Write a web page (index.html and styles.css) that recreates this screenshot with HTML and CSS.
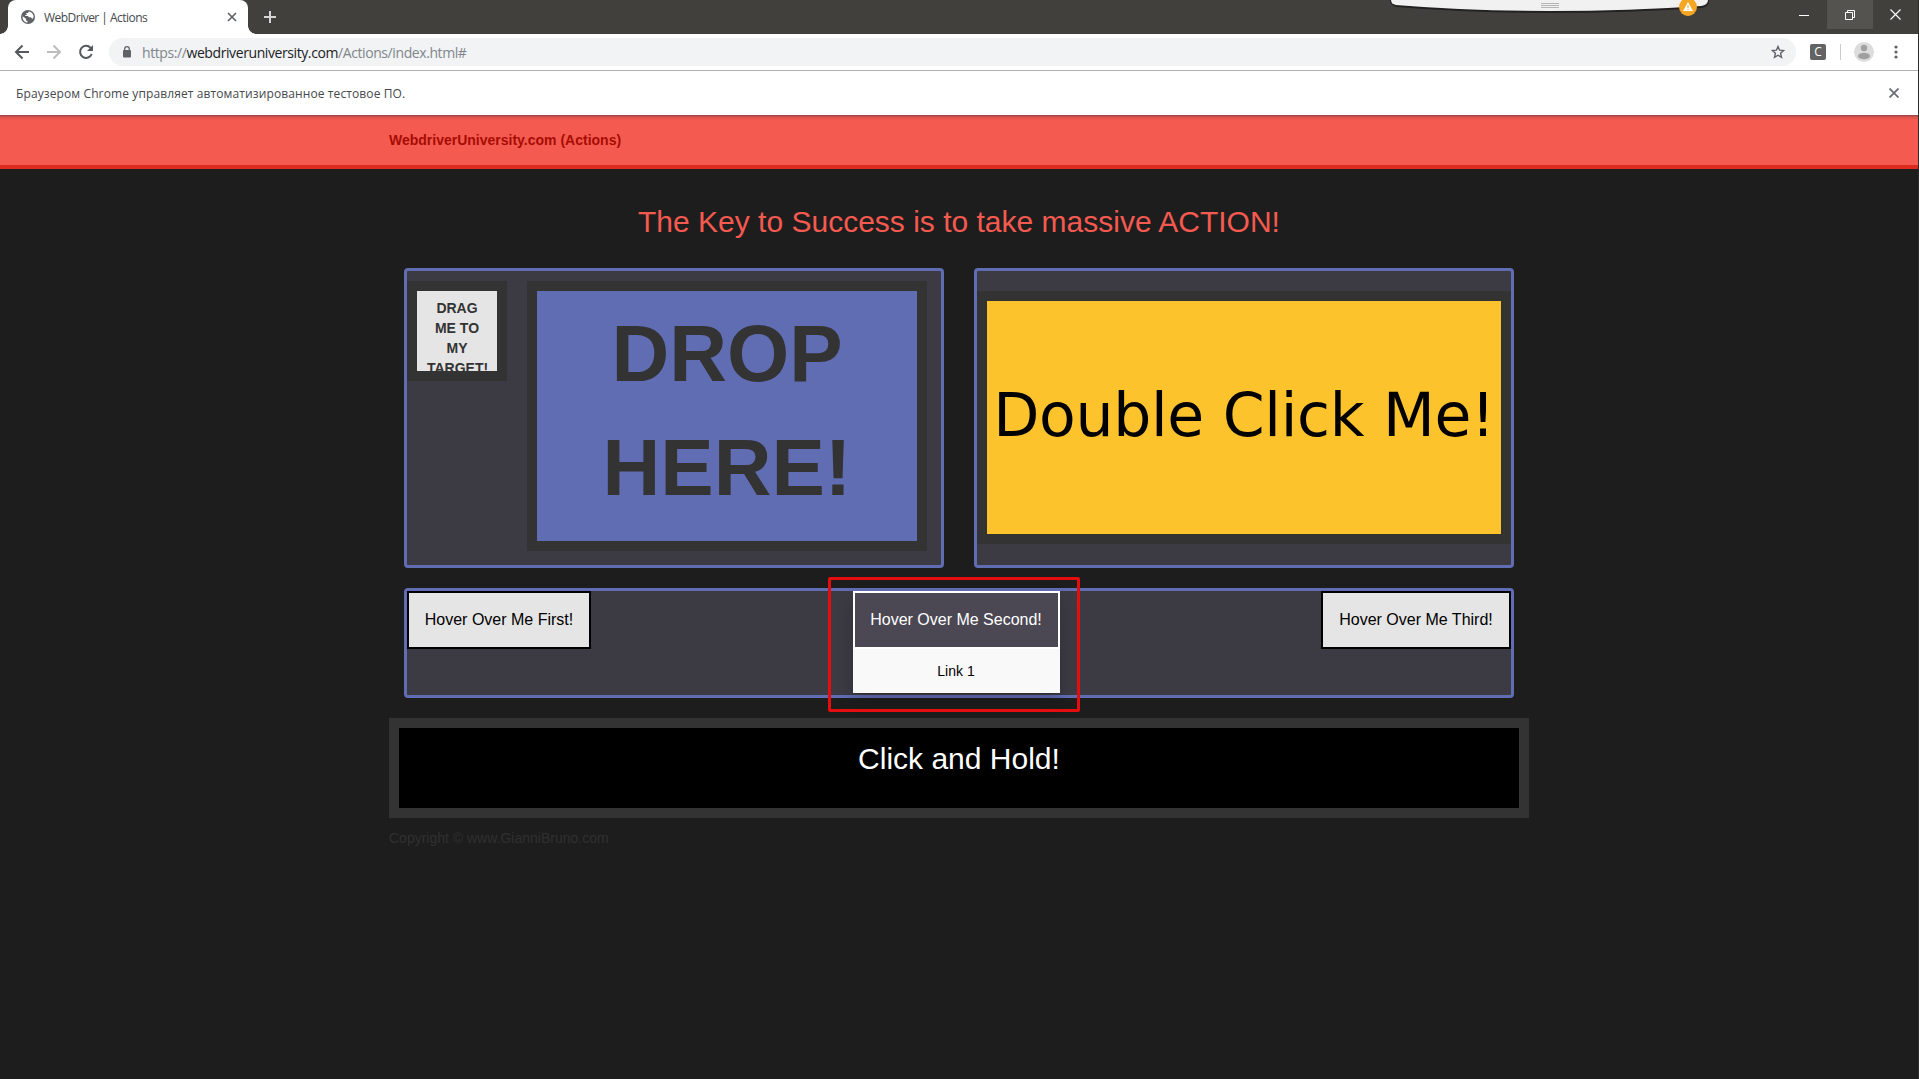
FILE: index.html
```html
<!DOCTYPE html>
<html lang="ru">
<head>
<meta charset="utf-8">
<title>WebDriver | Actions</title>
<link rel="stylesheet" href="styles.css">
</head>
<body>
<div class="window">
  <header class="tabstrip">
    <div class="tab">
      <svg class="globe" width="14" height="14" viewBox="0 0 14 14"><circle cx="7" cy="7" r="7" fill="#5f6368"/><path d="M1.600 6.200 5 8.800v1.400l1.500 1v1.400C3.500 12.500 1.300 9.800 1.600 6.200ZM4.500 3h2.300L8 1.600c2.500.5 4.400 2.300 4.700 5.200l-1.200 2.200-1.700-1.700H8L6.800 6.100H4.300V4.900h1.400V3.700Z" fill="#fff"/></svg>
      <span class="tab-title">WebDriver | Actions</span>
      <svg class="tab-close" width="10" height="10" viewBox="0 0 10 10" stroke="#5f6368" stroke-width="1.7"><path d="M1 1l8 8M9 1l-8 8"/></svg>
    </div>
    <svg class="new-tab" width="12" height="12" viewBox="0 0 12 12" stroke="#d5d5d4" stroke-width="2"><path d="M6 0v12M0 6h12"/></svg>
    <div class="window-buttons">
      <span class="wbtn"><svg width="10" height="10" viewBox="0 0 10 10" stroke="#fff"><path d="M0 5.500h10"/></svg></span>
      <span class="wbtn wbtn-hover"><svg width="10" height="10" viewBox="0 0 10 10" stroke="#fff" fill="none"><path d="M.5 2.500h7v7h-7zM2.500 2.500v-2h7v7h-2"/></svg></span>
      <span class="wbtn"><svg width="11" height="11" viewBox="0 0 11 11" stroke="#fff" stroke-width="1.1"><path d="M.5.5l10 10M10.500.5l-10 10"/></svg></span>
    </div>
    <svg class="session-bar" width="322" height="20" viewBox="0 0 322 20"><path d="M2 1Q3 5 8 6Q80 12 160 12T312 7Q319 6 319 1V0H2Z" fill="none" stroke="#222" stroke-width="2"/><path d="M2 0Q2 4 7 5Q80 11 160 11T312 6Q319 5 319 0Z" fill="#f1f1f1"/><path d="M152 3.500h18M152 5.500h18M152 7.500h18" stroke="#b5b5b5"/><circle cx="299" cy="7" r="9" fill="#f5a623"/><path d="M299 2l5 9h-10z" fill="#fff"/><path d="M299 5v3M299 9v1" stroke="#f5a623"/></svg>
  </header>
  <div class="toolbar">
    <svg width="16" height="16" viewBox="0 0 16 16" fill="none" stroke="#55585c" stroke-width="2"><path d="M15 8H2M8.500 1.500 2 8l6.500 6.500"/></svg>
    <svg width="16" height="16" viewBox="0 0 16 16" fill="none" stroke="#bdbdbd" stroke-width="2"><path d="M1 8h13M7.500 1.500 14 8l-6.500 6.500"/></svg>
    <svg width="16" height="16" viewBox="0 0 16 16" fill="none" stroke="#55585c" stroke-width="2"><path d="M13.700 10A6 6 0 1 1 12.500 3.800L14 5.300"/><path d="M15 1v6H9z" fill="#55585c" stroke="none"/></svg>
    <div class="omnibox">
      <svg width="10" height="12" viewBox="0 0 10 12"><rect x="1" y="4" width="8" height="7.500" rx="1" fill="#5f6368"/><path d="M2.700 5V3a2.300 2.300 0 0 1 4.600 0V5" fill="none" stroke="#5f6368" stroke-width="1.300"/></svg>
      <span class="url">https://<b>webdriveruniversity.com</b>/Actions/index.html#</span>
      <svg class="star" width="14" height="14" viewBox="0 0 14 14"><path d="M7 1.500l1.600 3.700 4 .4-3 2.700.9 4L7 10.200l-3.500 2.100.9-4-3-2.700 4-.4z" fill="none" stroke="#5f6368" stroke-width="1.400"/></svg>
    </div>
    <span class="extension">C</span>
    <span class="divider"></span>
    <svg class="avatar" width="20" height="20" viewBox="0 0 20 20"><circle cx="10" cy="10" r="10" fill="#dcdcdc"/><circle cx="10" cy="6" r="3.200" fill="#a0a0a0"/><ellipse cx="10" cy="14" rx="6" ry="3.200" fill="#a0a0a0"/></svg>
    <svg class="menu" width="4" height="14" viewBox="0 0 4 14" fill="#5f6368"><circle cx="2" cy="2" r="1.600"/><circle cx="2" cy="7" r="1.600"/><circle cx="2" cy="12" r="1.600"/></svg>
  </div>
  <div class="infobar">
    <span class="info-text">Браузером Chrome управляет автоматизированное тестовое ПО.</span>
    <svg width="10" height="10" viewBox="0 0 10 10" stroke="#6b6e72" stroke-width="1.800"><path d="M.5.5l9 9M9.500.5l-9 9"/></svg>
  </div>
  <nav class="navbar"><div class="container"><a class="brand">WebdriverUniversity.com (Actions)</a></div></nav>
  <main class="container">
    <h1 class="title">The Key to Success is to take massive ACTION!</h1>
    <div class="panels">
      <section class="panel drag-panel">
        <div class="drag"><b>DRAG ME TO MY TARGET!</b></div>
        <div class="drop"><b>DROP HERE!</b></div>
      </section>
      <section class="panel click-panel">
        <div class="double"><span class="double-text">Double Click Me!</span></div>
      </section>
    </div>
    <section class="panel hover-panel">
      <button class="hover-btn first">Hover Over Me First!</button>
      <div class="dropdown">
        <button class="hover-btn active">Hover Over Me Second!</button>
        <a class="dropdown-link">Link 1</a>
        <div class="highlight"></div>
      </div>
      <button class="hover-btn third">Hover Over Me Third!</button>
    </section>
    <section class="hold">Click and Hold!</section>
    <footer class="copyright">Copyright © www.GianniBruno.com</footer>
  </main>
</div>
</body>
</html>
```
FILE: styles.css
```css
* { box-sizing: border-box; }
body { margin: 0; background: #1d1d1d; font-family: "Liberation Sans", Arial, sans-serif; }
svg { display: block; flex: none; }
.window { height: 1079px; overflow: hidden; border-right: 1px solid #2b2b2b; }
.tabstrip { position: relative; display: flex; align-items: center; height: 34px; padding-left: 8px; background: #42403d; }
.tab { position: relative; display: flex; align-items: center; width: 240px; height: 34px; padding: 0 11px 0 13px; background: #fff; border-radius: 8px 8px 0 0; }
.tab::before, .tab::after { content: ""; position: absolute; bottom: 0; width: 8px; height: 8px; }
.tab::before { left: -8px; background: radial-gradient(circle at 0 0, #42403d 7.5px, #fff 8px); }
.tab::after { right: -8px; background: radial-gradient(circle at 100% 0, #42403d 7.5px, #fff 8px); }
.tab-title { margin-left: 9px; font: 12px "Open Sans", "Noto Sans", sans-serif; letter-spacing: -.52px; color: #45484c; }
.tab-close { margin-left: auto; }
.new-tab { margin-left: 16px; }
.window-buttons { display: flex; align-self: flex-start; margin-left: auto; }
.wbtn { display: flex; align-items: center; justify-content: center; width: 46px; height: 29px; }
.wbtn:last-child { width: 45px; }
.wbtn-hover { background: #555350; }
.session-bar { position: absolute; left: 1389px; top: 0; }
.toolbar { display: flex; align-items: center; height: 37px; padding: 0 20px 0 14px; background: #fff; border-bottom: 1px solid #b0b0b0; }
.toolbar > svg + svg { margin-left: 16px; }
.omnibox { display: flex; align-items: center; flex: 1; height: 28px; margin-left: 15px; padding: 0 11px 0 13px; border-radius: 14px; background: #f1f3f4; }
.url { margin-left: 10px; font: 14px "Open Sans", "Noto Sans", sans-serif; letter-spacing: -.41px; color: #80868b; }
.url b { font-weight: 400; color: #202124; }
.star { margin-left: auto; }
.extension { width: 16px; height: 16px; margin-left: 14px; border-radius: 2px; background: #636363; color: #fff; font: 12px/16px "Open Sans", sans-serif; text-align: center; }
.divider { width: 1px; height: 16px; margin: 0 13px 0 14px; background: #ccc; }
.toolbar > .menu { margin-left: 20px; }
.infobar { display: flex; align-items: center; justify-content: space-between; height: 44px; padding: 0 19px 0 16px; background: #fff; }
.info-text { font: 12px "Open Sans", "Noto Sans", sans-serif; letter-spacing: .11px; color: #45484c; }
.navbar { height: 54px; background: linear-gradient(#8e4542, #d9534c 2px, #f55a50 5px); border-bottom: 4px solid #dd2b20; }
.container { width: 1140px; margin: 0 auto; }
.brand { display: block; padding-top: 15px; font-size: 14px; line-height: 20px; font-weight: 700; color: #a60c04; }
.title { margin: 0; padding-top: 36px; height: 99px; font-size: 30px; line-height: 33px; font-weight: 400; text-align: center; color: #f55a50; }
.panels { display: flex; gap: 30px; padding: 0 15px; }
.panel { border: 3px solid #616db3; border-radius: 4px; background: #3c3b44; }
.drag-panel, .click-panel { width: 540px; height: 300px; }
.drag-panel { display: flex; align-items: flex-start; gap: 20px; padding-top: 10px; }
.drag { width: 100px; height: 100px; padding: 7px 10px; border: 10px solid #333; background: #e5e5e5; color: #333; overflow: hidden; font-size: 14px; line-height: 20px; text-align: center; }
.drop { width: 400px; height: 270px; padding: 6px 50px; border: 10px solid #333; background: #616db3; color: #333; font-size: 80px; line-height: 114.300px; text-align: center; }
.click-panel { padding-top: 20px; }
.double { display: flex; align-items: center; justify-content: center; height: 253px; padding-bottom: 5px; border: 10px solid #333; background: #fdc32d; color: #000; white-space: nowrap; }
.double-text { font: 60px/1 "DejaVu Sans", sans-serif; letter-spacing: -.3px; }
.hover-panel { display: flex; justify-content: space-between; align-items: flex-start; margin: 20px 15px 0; height: 110px; }
.hover-btn { display: block; width: 100%; height: 58px; padding: 0; border: 2px solid #000; background: #e5e5e5; color: #000; font: 16px "Liberation Sans", Arial, sans-serif; white-space: nowrap; }
.first { width: 184px; }
.third { width: 190px; }
.dropdown { position: relative; width: 207px; height: 102px; background: #f9f9f9; box-shadow: 0 8px 16px rgba(0,0,0,.2); }
.active { border-color: #fff; background: #4b4854; color: #fff; }
.dropdown-link { display: block; padding-top: 12px; font-size: 14px; line-height: 20px; text-align: center; color: #000; }
.highlight { position: absolute; left: -25px; top: -14px; width: 252px; height: 135px; border: 3px solid #e50d0d; border-radius: 2px; }
.hold { height: 100px; margin-top: 20px; padding-top: 14px; border: 10px solid #333; background: #000; color: #fff; font-size: 30px; line-height: 33px; text-align: center; }
.copyright { padding-top: 10px; font-size: 14px; line-height: 20px; color: #303030; }
```
